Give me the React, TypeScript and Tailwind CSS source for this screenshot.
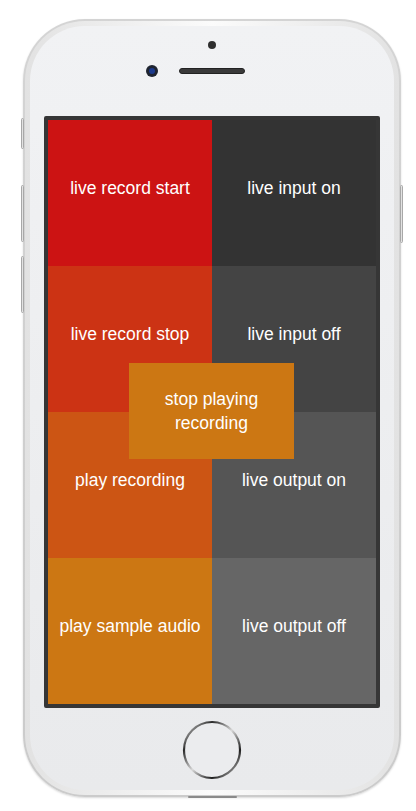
import React from "react";

const leftCells: { label: string; bg: string }[] = [
  { label: "live record start", bg: "bg-[#cc1313]" },
  { label: "live record stop", bg: "bg-[#cc3314]" },
  { label: "play recording", bg: "bg-[#cc5514]" },
  { label: "play sample audio", bg: "bg-[#cc7713]" },
];

const rightCells: { label: string; bg: string }[] = [
  { label: "live input on", bg: "bg-[#333333]" },
  { label: "live input off", bg: "bg-[#444444]" },
  { label: "live output on", bg: "bg-[#555555]" },
  { label: "live output off", bg: "bg-[#666666]" },
];

const HomeButton: React.FC = () => (
  <svg width="60" height="60" viewBox="0 0 60 60">
    <defs>
      <linearGradient id="ring" x1="0" y1="0" x2="1" y2="1">
        <stop offset="0" stopColor="#f2f2f2" />
        <stop offset="0.25" stopColor="#2a2a2a" />
        <stop offset="0.5" stopColor="#d8d8d8" />
        <stop offset="0.75" stopColor="#1e1e1e" />
        <stop offset="1" stopColor="#e8e8e8" />
      </linearGradient>
    </defs>
    <circle cx="30" cy="30" r="28" fill="#ebecee" stroke="url(#ring)" strokeWidth="2.2" />
  </svg>
);

const App: React.FC = () => {
  return (
    <div
      className="w-[416px] h-[811px] bg-white overflow-hidden pt-[19px] pl-[23px]"
      style={{ fontFamily: '"Liberation Sans", Arial, sans-serif' }}
    >
      <div className="relative w-[378px] h-[778px] rounded-[62px] bg-gradient-to-b from-[#d4d4d4] to-[#cbcbcb] p-[2px] shadow-[0_1px_2px_rgba(0,0,0,0.15)]">
        {/* side buttons */}
        <span className="absolute left-[-2px] top-[99px] w-[3px] h-[31px] rounded-sm bg-[#e2e2e2] border border-[#a8a8a8]" />
        <span className="absolute left-[-2px] top-[166px] w-[3px] h-[57px] rounded-sm bg-[#e2e2e2] border border-[#a8a8a8]" />
        <span className="absolute left-[-2px] top-[237px] w-[3px] h-[57px] rounded-sm bg-[#e2e2e2] border border-[#a8a8a8]" />
        <span className="absolute right-[-2px] top-[166px] w-[3px] h-[58px] rounded-sm bg-[#e2e2e2] border border-[#a8a8a8]" />
        {/* port */}
        <span className="absolute bottom-[-1px] left-[165px] w-[49px] h-[2px] rounded-full bg-[#8a8a8a]" />

        <div className="h-full rounded-[60px] bg-gradient-to-r from-[#e2e2e2] via-[#fbfbfb] to-[#e2e2e2] p-[5px]">
          <div className="h-full rounded-[55px] bg-gradient-to-b from-[#f1f2f4] to-[#e9eaec] flex flex-col items-center">
            <div className="mt-[15px] w-[8px] h-[8px] rounded-full bg-[#2e2e2e]" />
            <div className="mt-[16px] w-[132px] flex items-center gap-[21px]">
              <div className="w-[12px] h-[12px] rounded-full bg-[#1f2430] flex items-center justify-center">
                <div className="w-[6px] h-[6px] rounded-full bg-[#1c3a8c]" />
              </div>
              <div className="w-[66px] h-[6px] rounded-full bg-[#3a3a3a] border border-[#222]" />
            </div>

            <div className="mt-[39px] w-[336px] h-[592px] border-4 border-[#363636] rounded-[2px]">
              <div className="relative h-full grid grid-cols-2 grid-rows-4">
                {leftCells.map((left, i) => (
                  <React.Fragment key={left.label}>
                    <div className={`${left.bg} flex items-center justify-center pb-[10px] text-white text-[17.5px]`}>
                      {left.label}
                    </div>
                    <div className={`${rightCells[i].bg} flex items-center justify-center pb-[10px] text-white text-[17.5px]`}>
                      {rightCells[i].label}
                    </div>
                  </React.Fragment>
                ))}

                {/* overlay button over the grid */}
                <div className="absolute left-[81px] top-[243px] w-[165px] h-[96px] bg-[#cc7713] flex items-center justify-center text-center text-white text-[17.5px] leading-6">
                  stop playing
                  <br />
                  recording
                </div>
              </div>
            </div>

            <div className="mt-[12px]">
              <HomeButton />
            </div>
          </div>
        </div>
      </div>
    </div>
  );
};

export default App;
